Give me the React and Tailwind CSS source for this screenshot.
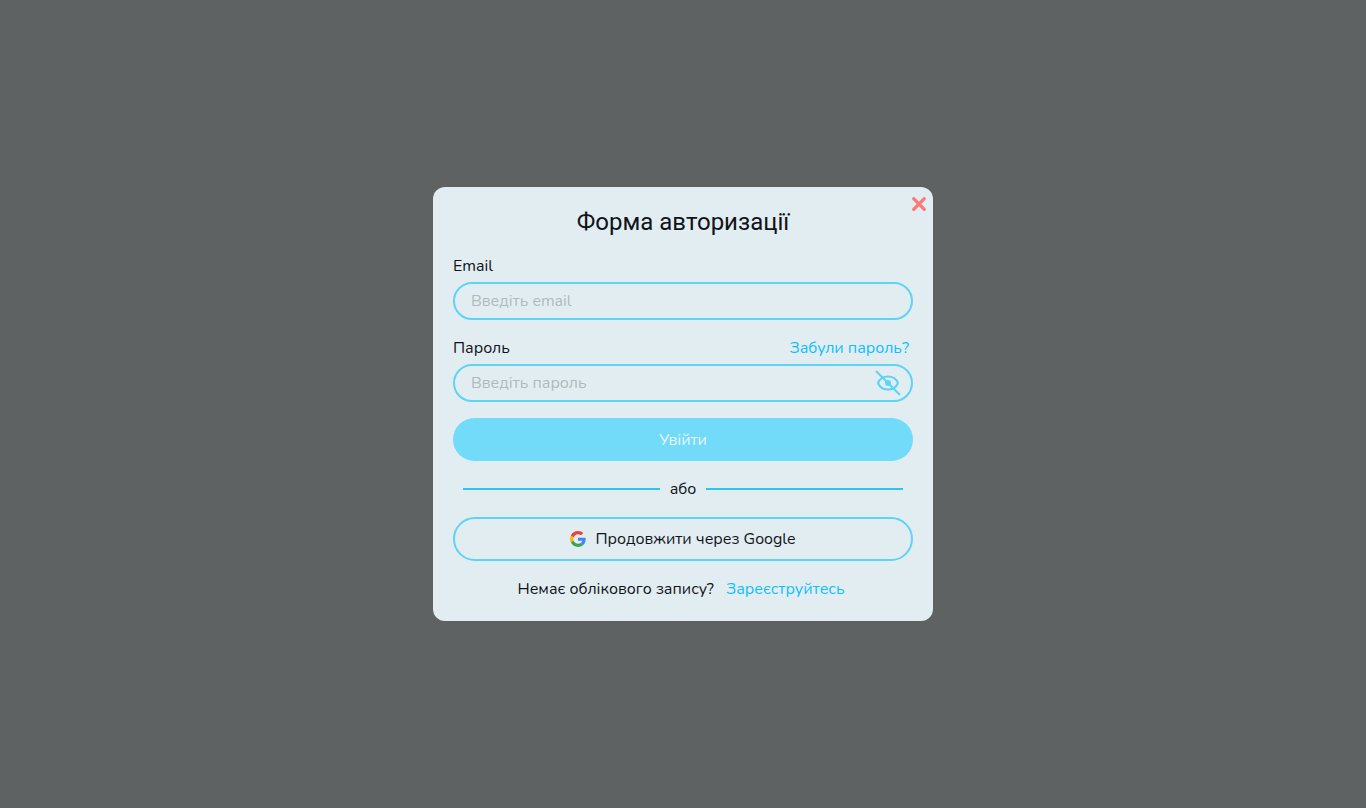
import { useState } from "react";

const field =
  "block h-[38px] w-full rounded-full border-2 border-[#5dd3f5] bg-transparent pl-4 text-base text-[#101418] outline-none placeholder:text-[#aebbbd]";
const link = "text-[#10bfff] hover:underline";

function GoogleIcon() {
  return (
    <svg viewBox="0 0 48 48" className="size-4" aria-hidden="true">
      <path fill="#EA4335" d="M24 9.5c3.54 0 6.71 1.22 9.21 3.6l6.85-6.85C35.9 2.38 30.47 0 24 0 14.62 0 6.51 5.38 2.56 13.22l7.98 6.19C12.43 13.72 17.74 9.5 24 9.5z" />
      <path fill="#4285F4" d="M46.98 24.55c0-1.57-.15-3.09-.38-4.55H24v9.02h12.94c-.58 2.96-2.26 5.48-4.78 7.18l7.73 6c4.51-4.18 7.09-10.36 7.09-17.65z" />
      <path fill="#FBBC05" d="M10.53 28.59c-.48-1.45-.76-2.99-.76-4.59s.27-3.14.76-4.59l-7.98-6.19C.92 16.46 0 20.12 0 24c0 3.88.92 7.54 2.56 10.78l7.97-6.19z" />
      <path fill="#34A853" d="M24 48c6.48 0 11.93-2.13 15.89-5.81l-7.73-6c-2.15 1.45-4.92 2.3-8.16 2.3-6.26 0-11.57-4.22-13.47-9.91l-7.98 6.19C6.51 42.62 14.62 48 24 48z" />
    </svg>
  );
}

function EyeIcon({ crossed }) {
  return (
    <svg viewBox="0 0 26 26" className="size-[26px]" fill="none" stroke="#5dd3f5" strokeWidth="2" aria-hidden="true">
      <path d="M3 13C5 8.200 8.600 6.500 13 6.500S21 8.200 23 13C21 17.800 17.400 19.500 13 19.500S5 17.800 3 13Z" />
      <circle cx="13" cy="13" r="3" fill="#5dd3f5" stroke="none" />
      {crossed && <path d="M1 1L25 25" />}
    </svg>
  );
}

export default function App() {
  const [visible, setVisible] = useState(false);

  return (
    <main className="flex min-h-screen items-center justify-center bg-[#5e6262] font-['Nunito','Lato','Noto_Sans',sans-serif] text-base text-[#101418]">
      <form
        className="relative flex w-full max-w-[500px] flex-col gap-4 rounded-xl bg-[#e2edf2] p-5"
        onSubmit={(e) => e.preventDefault()}
      >
        <button type="button" aria-label="Закрити" className="absolute top-[9px] right-1.5">
          <svg viewBox="0 0 16 16" className="size-4" stroke="#ff7878" strokeWidth="3.200" strokeLinecap="round" aria-hidden="true">
            <path d="M2.700 2.700L13.300 13.300M13.300 2.700L2.700 13.300" />
          </svg>
        </button>

        <h1 className="text-center font-['Roboto',sans-serif] text-2xl leading-[31px]">Форма авторизації</h1>

        <div className="flex flex-col gap-1">
          <label htmlFor="email">Email</label>
          <input id="email" type="email" placeholder="Введіть email" className={`${field} pr-4`} />
        </div>

        <div className="flex flex-col gap-1">
          <div className="flex justify-between pr-1">
            <label htmlFor="password">Пароль</label>
            <a href="#forgot" className={link}>Забули пароль?</a>
          </div>
          <div className="relative">
            <input id="password" type={visible ? "text" : "password"} placeholder="Введіть пароль" className={`${field} pr-12`} />
            <button
              type="button"
              aria-label="Показати пароль"
              className="absolute inset-y-0 right-3 flex items-center"
              onClick={() => setVisible(!visible)}
            >
              <EyeIcon crossed={!visible} />
            </button>
          </div>
        </div>

        <button type="submit" className="h-[43px] rounded-full bg-[#71dbf9] text-[#eef6fa]">Увійти</button>

        <div className="flex items-center gap-2.5 px-2.5">
          <span className="h-0.5 flex-1 bg-[#2cc4f2]" />
          <span>або</span>
          <span className="h-0.5 flex-1 bg-[#2cc4f2]" />
        </div>

        <button type="button" className="flex h-11 items-center justify-center gap-[9px] rounded-full border-2 border-[#5dd3f5]">
          <GoogleIcon />
          Продовжити через Google
        </button>

        <p className="flex justify-center gap-3 pr-1">
          Немає облікового запису?
          <a href="#register" className={link}>Зареєструйтесь</a>
        </p>
      </form>
    </main>
  );
}
